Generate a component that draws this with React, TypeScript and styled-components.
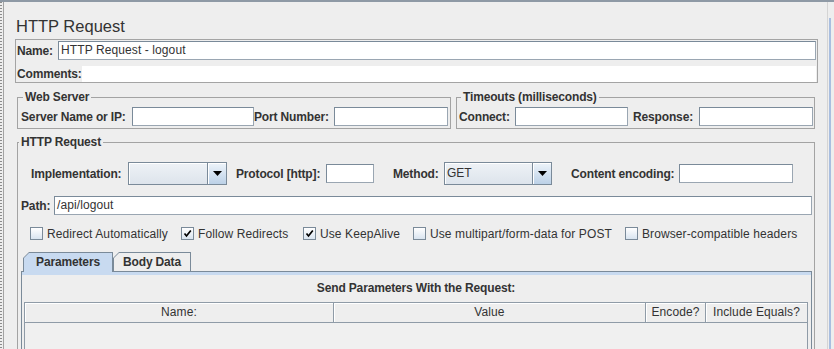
import React from "react";
import styled, { createGlobalStyle } from "styled-components";

const GlobalStyle = createGlobalStyle`
  html, body {
    margin: 0;
    padding: 0;
    background: #eeeeee;
  }
  body {
    font-family: "Liberation Sans", Arial, sans-serif;
  }
`;

const Window = styled.div`
  display: flex;
  width: 834px;
  height: 349px;
  overflow: hidden;
  box-sizing: border-box;
  border-top: 2px solid #8e99a5;
  background: #eeeeee;
  color: #333333;
  font-size: 12px;
`;

const Splitter = styled.div`
  flex: none;
  width: 3px;
  background: repeating-linear-gradient(to bottom, #8c8c8c 0 1px, #eeeeee 1px 3px);
  background-size: 2px 100%;
  background-repeat: no-repeat;
`;

const Main = styled.div`
  flex: 1;
  min-width: 0;
  display: flex;
  flex-direction: column;
  border-left: 1px solid #a3a3a3;
  padding: 14px 9px 0 11px;
`;

const RightRail = styled.div`
  flex: none;
  width: 6px;
  display: flex;
  flex-direction: column;
  border-left: 1px solid #d4d4d4;
`;

const RailTrack = styled.div`
  flex: 1;
  margin: 16px 0 0 1px;
  border-left: 2px solid #a9bee0;
`;

const Title = styled.h1`
  margin: 0 0 3px 1px;
  font: 16.5px/20px "Liberation Sans", Arial, sans-serif;
  color: #333333;
`;

const NameBox = styled.div`
  border: 1px solid #a4a4a4;
  padding: 1px 1px 0 1px;
  display: flex;
  flex-direction: column;
`;

const Grid = styled.div<{ $cols: string; $h: number; $mt?: number; $pl?: number; $pr?: number }>`
  display: grid;
  grid-template-columns: ${(p) => p.$cols};
  align-items: center;
  height: ${(p) => p.$h}px;
  margin-top: ${(p) => p.$mt ?? 0}px;
  padding-left: ${(p) => p.$pl ?? 0}px;
  padding-right: ${(p) => p.$pr ?? 0}px;
`;

const Label = styled.span<{ $pl?: number }>`
  padding-left: ${(p) => p.$pl ?? 0}px;
  font: bold 12px/14px "Liberation Sans", Arial, sans-serif;
  letter-spacing: -0.15px;
  color: #333333;
  white-space: nowrap;
`;

const Field = styled.div`
  box-sizing: border-box;
  height: 19px;
  background: #ffffff;
  border: 1px solid #7a8a99;
  border-right-color: #9aa6b2;
  border-bottom-color: #9aa6b2;
  padding-left: 2px;
  font: 12px/17px "Liberation Sans", Arial, sans-serif;
  letter-spacing: 0.1px;
  color: #333333;
  white-space: nowrap;
  overflow: hidden;
`;

const TextArea = styled.div`
  height: 16px;
  background: #ffffff;
`;

const Sections = styled.div`
  display: flex;
  flex-direction: column;
  padding: 0 3px 0 2px;
`;

const GroupRow = styled.div`
  display: flex;
  gap: 5px;
  margin-top: 8px;
`;

const Group = styled.fieldset<{ $w?: number; $mt?: number; $pb?: number }>`
  margin: ${(p) => p.$mt ?? 0}px 0 0 0;
  padding: 0 0 ${(p) => p.$pb ?? 0}px 0;
  min-width: 0;
  box-sizing: border-box;
  border: 1px solid #a3a3a3;
  ${(p) => (p.$w ? `width: ${p.$w}px; flex: none;` : "flex: 1;")}
`;

const Legend = styled.legend<{ $ml: number }>`
  margin-left: ${(p) => p.$ml}px;
  padding: 0 2px;
  font: bold 12px/12px "Liberation Sans", Arial, sans-serif;
  letter-spacing: -0.15px;
  color: #333333;
`;

const GroupBody = styled.div<{ $pt: number }>`
  padding-top: ${(p) => p.$pt}px;
`;

const Combo = styled.div`
  display: flex;
  box-sizing: border-box;
  height: 23px;
  border: 1px solid #7a8a99;
`;

const ComboValue = styled.div`
  flex: 1;
  background: linear-gradient(to bottom, #eef2f6, #dde4ec);
  box-shadow: inset 1px 1px 0 #ffffff;
  padding-left: 2px;
  font: 12px/21px "Liberation Sans", Arial, sans-serif;
  color: #333333;
`;

const ComboButton = styled.div`
  flex: none;
  width: 18px;
  border-left: 1px solid #7a8a99;
  background: linear-gradient(to bottom, #eef4fa, #bcd1e7);
  box-shadow: inset 1px 1px 0 #ffffff;
  display: flex;
  align-items: center;
  justify-content: center;
`;

const CheckItem = styled.label`
  display: flex;
  align-items: center;
  gap: 4px;
  font: 12px/14px "Liberation Sans", Arial, sans-serif;
  letter-spacing: 0.1px;
  color: #333333;
  white-space: nowrap;
`;

const Box = styled.span`
  flex: none;
  width: 13px;
  height: 13px;
  box-sizing: border-box;
  border: 1px solid #7a8a99;
  background: linear-gradient(to bottom, #ffffff, #d9e4f0);
  display: flex;
  align-items: center;
  justify-content: center;
`;

const TabArea = styled.div`
  margin: 11px 2px 0 3px;
  display: flex;
  flex-direction: column;
`;

const TabStrip = styled.div`
  display: flex;
  align-items: flex-start;
  height: 20px;
  padding-left: 2px;
  position: relative;
  z-index: 1;
`;

const Tab = styled.div<{ $w: number; $active?: boolean }>`
  width: ${(p) => p.$w}px;
  height: ${(p) => (p.$active ? 20 : 19)}px;
  background: #7a8a99;
  clip-path: polygon(6px 0, 100% 0, 100% 100%, 0 100%, 0 6px);
  display: flex;
`;

const TabFace = styled.div<{ $active?: boolean }>`
  flex: 1;
  margin: 1px 1px 0 1px;
  background: ${(p) => (p.$active ? "#c8daf0" : "#eeeeee")};
  clip-path: polygon(5px 0, 100% 0, 100% 100%, 0 100%, 0 5px);
  text-align: center;
  font: bold 12px/18px "Liberation Sans", Arial, sans-serif;
  letter-spacing: -0.15px;
  color: #333333;
`;

const TabPanel = styled.div`
  margin-top: -1px;
  border: 1px solid #7a8a99;
  border-bottom: none;
  padding: 0 3px 0 2px;
  box-shadow: inset 0 3px 0 #c8daf0;
  display: flex;
  flex-direction: column;
`;

const PanelCaption = styled.div`
  margin-top: 9px;
  text-align: center;
  font: bold 12px/14px "Liberation Sans", Arial, sans-serif;
  letter-spacing: -0.15px;
  color: #333333;
`;

const Table = styled.div`
  margin-top: 7px;
  border: 1px solid #8f9ba7;
  border-bottom: none;
  display: flex;
  flex-direction: column;
`;

const HeaderRow = styled.div`
  display: grid;
  grid-template-columns: 309px 312px 60px 1fr;
  height: 19px;
  border-bottom: 1px solid #8f9ba7;
`;

const HeaderCell = styled.div<{ $last?: boolean }>`
  border-right: ${(p) => (p.$last ? "none" : "1px solid #8f9ba7")};
  box-shadow: inset 1px 1px 0 #ffffff;
  background: #eeeeee;
  text-align: center;
  font: 12px/19px "Liberation Sans", Arial, sans-serif;
  letter-spacing: 0.1px;
  color: #333333;
  white-space: nowrap;
`;

const TableBody = styled.div`
  height: 60px;
  background: #f0f0f0;
`;

const Arrow = () => (
  <svg width="9" height="5" viewBox="0 0 9 5">
    <path d="M0 0 H9 L4.5 5 Z" fill="#000" />
  </svg>
);

const Tick = () => (
  <svg width="9" height="9" viewBox="0 0 9 9">
    <path d="M1.5 4.5 L3.5 7 L7.8 1.5" stroke="#000" strokeWidth="1.7" fill="none" />
  </svg>
);

const checks = [
  { label: "Redirect Automatically", on: false },
  { label: "Follow Redirects", on: true },
  { label: "Use KeepAlive", on: true },
  { label: "Use multipart/form-data for POST", on: false },
  { label: "Browser-compatible headers", on: false },
];

const columns = ["Name:", "Value", "Encode?", "Include Equals?"];

export default function App() {
  return (
    <>
      <GlobalStyle />
      <Window>
        <Splitter />
        <Main>
          <Title>HTTP Request</Title>
          <NameBox>
            <Grid $cols="41px 1fr" $h={19}>
              <Label>Name:</Label>
              <Field>HTTP Request - logout</Field>
            </Grid>
            <Grid $cols="65px 1fr" $h={16} $mt={6}>
              <Label>Comments:</Label>
              <TextArea />
            </Grid>
          </NameBox>

          <Sections>
            <GroupRow>
              <Group $w={434} $pb={2}>
                <Legend $ml={5}>Web Server</Legend>
                <GroupBody $pt={4}>
                  <Grid $cols="111px 122px 80px 114px" $h={19} $pl={3}>
                    <Label>Server Name or IP:</Label>
                    <Field />
                    <Label>Port Number:</Label>
                    <Field />
                  </Grid>
                </GroupBody>
              </Group>
              <Group $pb={2}>
                <Legend $ml={4}>Timeouts (milliseconds)</Legend>
                <GroupBody $pt={4}>
                  <Grid $cols="56px 113px 71px 114px" $h={19} $pl={2}>
                    <Label>Connect:</Label>
                    <Field />
                    <Label $pl={5}>Response:</Label>
                    <Field />
                  </Grid>
                </GroupBody>
              </Group>
            </GroupRow>

            <Group $mt={7}>
              <Legend $ml={1}>HTTP Request</Legend>
              <GroupBody $pt={14}>
                <Grid $cols="107px 99px 99px 48px 70px 108px 127px 114px" $h={23} $pl={3}>
                  <Label $pl={10}>Implementation:</Label>
                  <Combo>
                    <ComboValue />
                    <ComboButton>
                      <Arrow />
                    </ComboButton>
                  </Combo>
                  <Label $pl={9}>Protocol [http]:</Label>
                  <Field />
                  <Label $pl={19}>Method:</Label>
                  <Combo>
                    <ComboValue>GET</ComboValue>
                    <ComboButton>
                      <Arrow />
                    </ComboButton>
                  </Combo>
                  <Label $pl={19}>Content encoding:</Label>
                  <Field />
                </Grid>

                <Grid $cols="33px 1fr" $h={19} $mt={11} $pl={3} $pr={2}>
                  <Label>Path:</Label>
                  <Field>/api/logout</Field>
                </Grid>

                <Grid $cols="151px 122px 110px 212px 1fr" $h={15} $mt={11} $pl={12}>
                  {checks.map((c) => (
                    <CheckItem key={c.label}>
                      <Box>{c.on && <Tick />}</Box>
                      {c.label}
                    </CheckItem>
                  ))}
                </Grid>

                <TabArea>
                  <TabStrip>
                    <Tab $w={90} $active>
                      <TabFace $active>Parameters</TabFace>
                    </Tab>
                    <Tab $w={78}>
                      <TabFace>Body Data</TabFace>
                    </Tab>
                  </TabStrip>
                  <TabPanel>
                    <PanelCaption>Send Parameters With the Request:</PanelCaption>
                    <Table>
                      <HeaderRow>
                        {columns.map((c, i) => (
                          <HeaderCell key={c} $last={i === columns.length - 1}>
                            {c}
                          </HeaderCell>
                        ))}
                      </HeaderRow>
                      <TableBody />
                    </Table>
                  </TabPanel>
                </TabArea>
              </GroupBody>
            </Group>
          </Sections>
        </Main>
        <RightRail>
          <RailTrack />
        </RightRail>
      </Window>
    </>
  );
}
